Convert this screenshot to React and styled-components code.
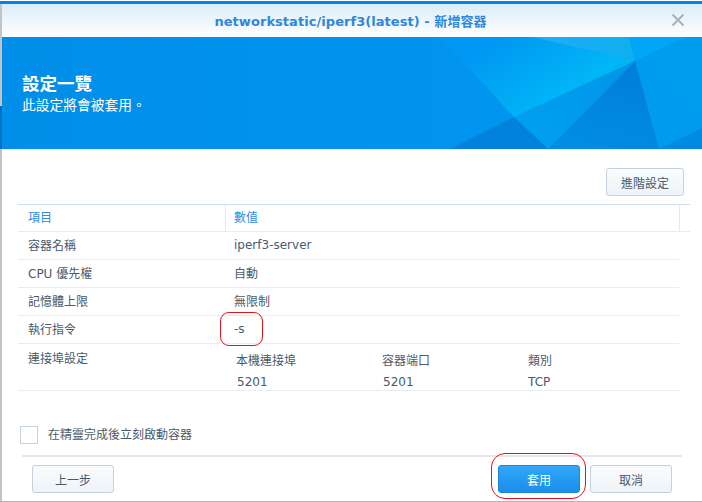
import React from 'react';
import styled, { createGlobalStyle } from 'styled-components';

const GlobalStyle = createGlobalStyle`
  html, body {
    margin: 0;
    padding: 0;
    background: #fff;
  }
  body {
    font-family: "DejaVu Sans", "Noto Sans CJK TC", sans-serif;
    font-size: 12px;
    color: #4a5a6a;
  }
`;

const Page = styled.div`
  position: relative;
  width: 702px;
  height: 502px;
  overflow: hidden;
  box-sizing: border-box;
  padding-top: 1px;
  background: #fff;
`;

const Window = styled.div`
  display: flex;
  flex-direction: column;
  width: 702px;
  height: 501px;
  box-sizing: border-box;
  border-top: 3px solid #0086e0;
  border-bottom: 1px solid #b4b4b4;
  background: linear-gradient(#c4c4c4, #c4c4c4) left / 2px 100% no-repeat, #fff;
`;

const TitleBar = styled.div`
  display: flex;
  align-items: center;
  justify-content: center;
  flex: none;
  height: 33px;
  margin-left: 2px;
  background: linear-gradient(#dcecfa, #ffffff);
  position: relative;
`;

const TitleText = styled.div`
  font-size: 13px;
  font-weight: bold;
  color: #2f86de;
  margin-right: 3px;
  letter-spacing: 0.05px;
`;

const CloseIcon = styled.svg`
  position: absolute;
  right: 17px;
  top: 9px;
`;

const Banner = styled.div`
  position: relative;
  flex: none;
  height: 112px;
  margin-left: 2px;
  box-sizing: border-box;
  padding: 36px 0 0 20px;
  overflow: hidden;
  background: linear-gradient(90deg, #008ee9, #0098f2);
  color: #fff;
`;

const BannerArt = styled.svg`
  position: absolute;
  left: 0;
  top: 0;
`;

const SideNotch = styled.div`
  position: absolute;
  left: 0;
  top: 106px;
  width: 2px;
  height: 43px;
  background: #0070c0;
`;

const BannerTitle = styled.div`
  position: relative;
  font-size: 17.5px;
  line-height: 22px;
  font-weight: bold;
`;

const BannerSub = styled.div`
  position: relative;
  font-size: 13.75px;
  line-height: 18px;
  margin-top: 1px;
`;

const Body = styled.div`
  display: flex;
  flex-direction: column;
  flex: 1;
  padding: 19px 0 0 18px;
`;

const ToolRow = styled.div`
  display: flex;
  justify-content: flex-end;
  padding-right: 18px;
  margin-bottom: 8px;
`;

const Button = styled.button`
  width: ${props => props.width || 82}px;
  height: 28px;
  box-sizing: border-box;
  padding: 0;
  font: inherit;
  font-size: 12px;
  border-radius: 3px;
  color: ${props => props.primary ? '#fff' : '#4a5a6a'};
  border: 1px solid ${props => props.primary ? '#1f86d6' : '#c5d0de'};
  background: ${props => props.primary
    ? 'linear-gradient(#32a7fb, #1a8eea)'
    : 'linear-gradient(#fafcfe, #eef3f8)'};
`;

const Table = styled.div`
  width: 672px;
`;

const HeadRow = styled.div`
  display: grid;
  grid-template-columns: 208px 454px 10px;
  height: 26px;
  border-top: 1px solid #d0dfee;
  border-bottom: 1px solid #e8edf2;
`;

const HeadCell = styled.div`
  display: flex;
  align-items: center;
  padding-left: ${props => props.$first ? 10 : 8}px;
  padding-bottom: 4px;
  color: #2f8ae6;
  border-right: ${props => props.$last ? 'none' : '1px solid #dfeaf5'};
`;

const Row = styled.div`
  display: grid;
  grid-template-columns: 208px 1fr;
  width: 661px;
  height: 27px;
  align-items: center;
  border-bottom: 1px solid #e9edf1;
`;

const PortRow = styled(Row)`
  height: 46px;
  align-items: start;
`;

const Cell = styled.div`
  padding-left: ${props => props.$first ? 10 : 8}px;
  padding-bottom: 2px;
  white-space: nowrap;
`;

const PortLabel = styled(Cell)`
  padding-top: 5px;
`;

const PortGrid = styled.div`
  display: grid;
  grid-template-columns: 146px 146px 1fr;
  padding: 7px 0 0 10px;
  line-height: 21px;
`;

const PortValue = styled.div`
  padding-left: ${props => props.$inset ? 1 : 0}px;
`;

const CheckRow = styled.div`
  display: flex;
  align-items: center;
  gap: 10px;
  margin: 35px 0 0 2px;
  height: 18px;
`;

const CheckLabel = styled.span`
  margin-top: -3px;
`;

const CheckBox = styled.div`
  width: 18px;
  height: 18px;
  box-sizing: border-box;
  border: 1px solid #c5d2e0;
  background: #fff;
`;

const Footer = styled.div`
  display: flex;
  justify-content: space-between;
  margin: 11px 20px 0 4px;
  padding: 8px 10px 0 10px;
  border-top: 2px solid #e6e6e6;
`;

const FooterGroup = styled.div`
  display: flex;
  gap: 10px;
`;

const Annotation = styled.div`
  position: absolute;
  box-sizing: border-box;
  border: 1px solid #e2121f;
  left: ${props => props.$x}px;
  top: ${props => props.$y}px;
  width: ${props => props.$w}px;
  height: ${props => props.$h}px;
  border-radius: ${props => props.$r}px;
`;

const BannerPolygons = () => (
  <BannerArt width="700" height="112" viewBox="2 37 700 112">
    <defs>
      <linearGradient id="glow" gradientUnits="userSpaceOnUse" x1="490" y1="45" x2="535" y2="112">
        <stop offset="0" stopColor="#0098f2" />
        <stop offset="1" stopColor="#00b5f6" />
      </linearGradient>
      <linearGradient id="deep" gradientUnits="userSpaceOnUse" x1="635" y1="61" x2="610" y2="149">
        <stop offset="0" stopColor="#007ed7" />
        <stop offset="1" stopColor="#008ce2" />
      </linearGradient>
      <linearGradient id="mid" gradientUnits="userSpaceOnUse" x1="620" y1="70" x2="530" y2="130">
        <stop offset="0" stopColor="#0096ea" />
        <stop offset="1" stopColor="#009fee" />
      </linearGradient>
      <linearGradient id="cap" gradientUnits="userSpaceOnUse" x1="532" y1="37" x2="635" y2="61">
        <stop offset="0" stopColor="#20acf8" />
        <stop offset="1" stopColor="#0fb0ef" />
      </linearGradient>
    </defs>
    <polygon points="440,37 532,37 635,61 514,117" fill="url(#glow)" />
    <polygon points="532,37 629,37 635,61" fill="url(#cap)" />
    <polygon points="629,37 686,37 635,61" fill="#00a6f8" />
    <polygon points="686,37 702,37 702,125 635,61" fill="#009cee" />
    <polygon points="635,61 702,125 702,128 659,149" fill="#009bef" />
    <polygon points="659,149 702,128 702,149" fill="#008ae2" />
    <polygon points="635,61 659,149 548,149" fill="url(#deep)" />
    <polygon points="635,61 514,117 548,149" fill="url(#mid)" />
    <polygon points="514,117 548,149 450,149" fill="#0082dd" />
  </BannerArt>
);

const rows = [
  ['容器名稱', 'iperf3-server'],
  ['CPU 優先權', '自動'],
  ['記憶體上限', '無限制'],
  ['執行指令', '-s'],
];

const App = () => (
  <Page>
    <GlobalStyle />
    <Window>
      <TitleBar>
        <TitleText>networkstatic/iperf3(latest) - 新增容器</TitleText>
        <CloseIcon width="14" height="14" viewBox="0 0 14 14">
          <path d="M1.5 1.5 L12.5 12.5 M12.5 1.5 L1.5 12.5" stroke="#a9b0b6" strokeWidth="2" fill="none" />
        </CloseIcon>
      </TitleBar>
      <Banner>
        <BannerPolygons />
        <BannerTitle>設定一覽</BannerTitle>
        <BannerSub>此設定將會被套用。</BannerSub>
      </Banner>
      <Body>
        <ToolRow>
          <Button width={78}>進階設定</Button>
        </ToolRow>
        <Table>
          <HeadRow>
            <HeadCell $first>項目</HeadCell>
            <HeadCell>數值</HeadCell>
            <HeadCell $last />
          </HeadRow>
          {rows.map(([label, value]) => (
            <Row key={label}>
              <Cell $first>{label}</Cell>
              <Cell>{value}</Cell>
            </Row>
          ))}
          <PortRow>
            <PortLabel $first>連接埠設定</PortLabel>
            <PortGrid>
              <div>本機連接埠</div>
              <div>容器端口</div>
              <div>類別</div>
              <PortValue $inset>5201</PortValue>
              <PortValue $inset>5201</PortValue>
              <PortValue>TCP</PortValue>
            </PortGrid>
          </PortRow>
        </Table>
        <CheckRow>
          <CheckBox />
          <CheckLabel>在精靈完成後立刻啟動容器</CheckLabel>
        </CheckRow>
        <Footer>
          <Button>上一步</Button>
          <FooterGroup>
            <Button primary>套用</Button>
            <Button>取消</Button>
          </FooterGroup>
        </Footer>
      </Body>
    </Window>
    <SideNotch />
    <Annotation $x={220} $y={312} $w={43} $h={34} $r={9} />
    <Annotation $x={491} $y={453} $w={95} $h={46} $r={14} />
  </Page>
);

export default App;
